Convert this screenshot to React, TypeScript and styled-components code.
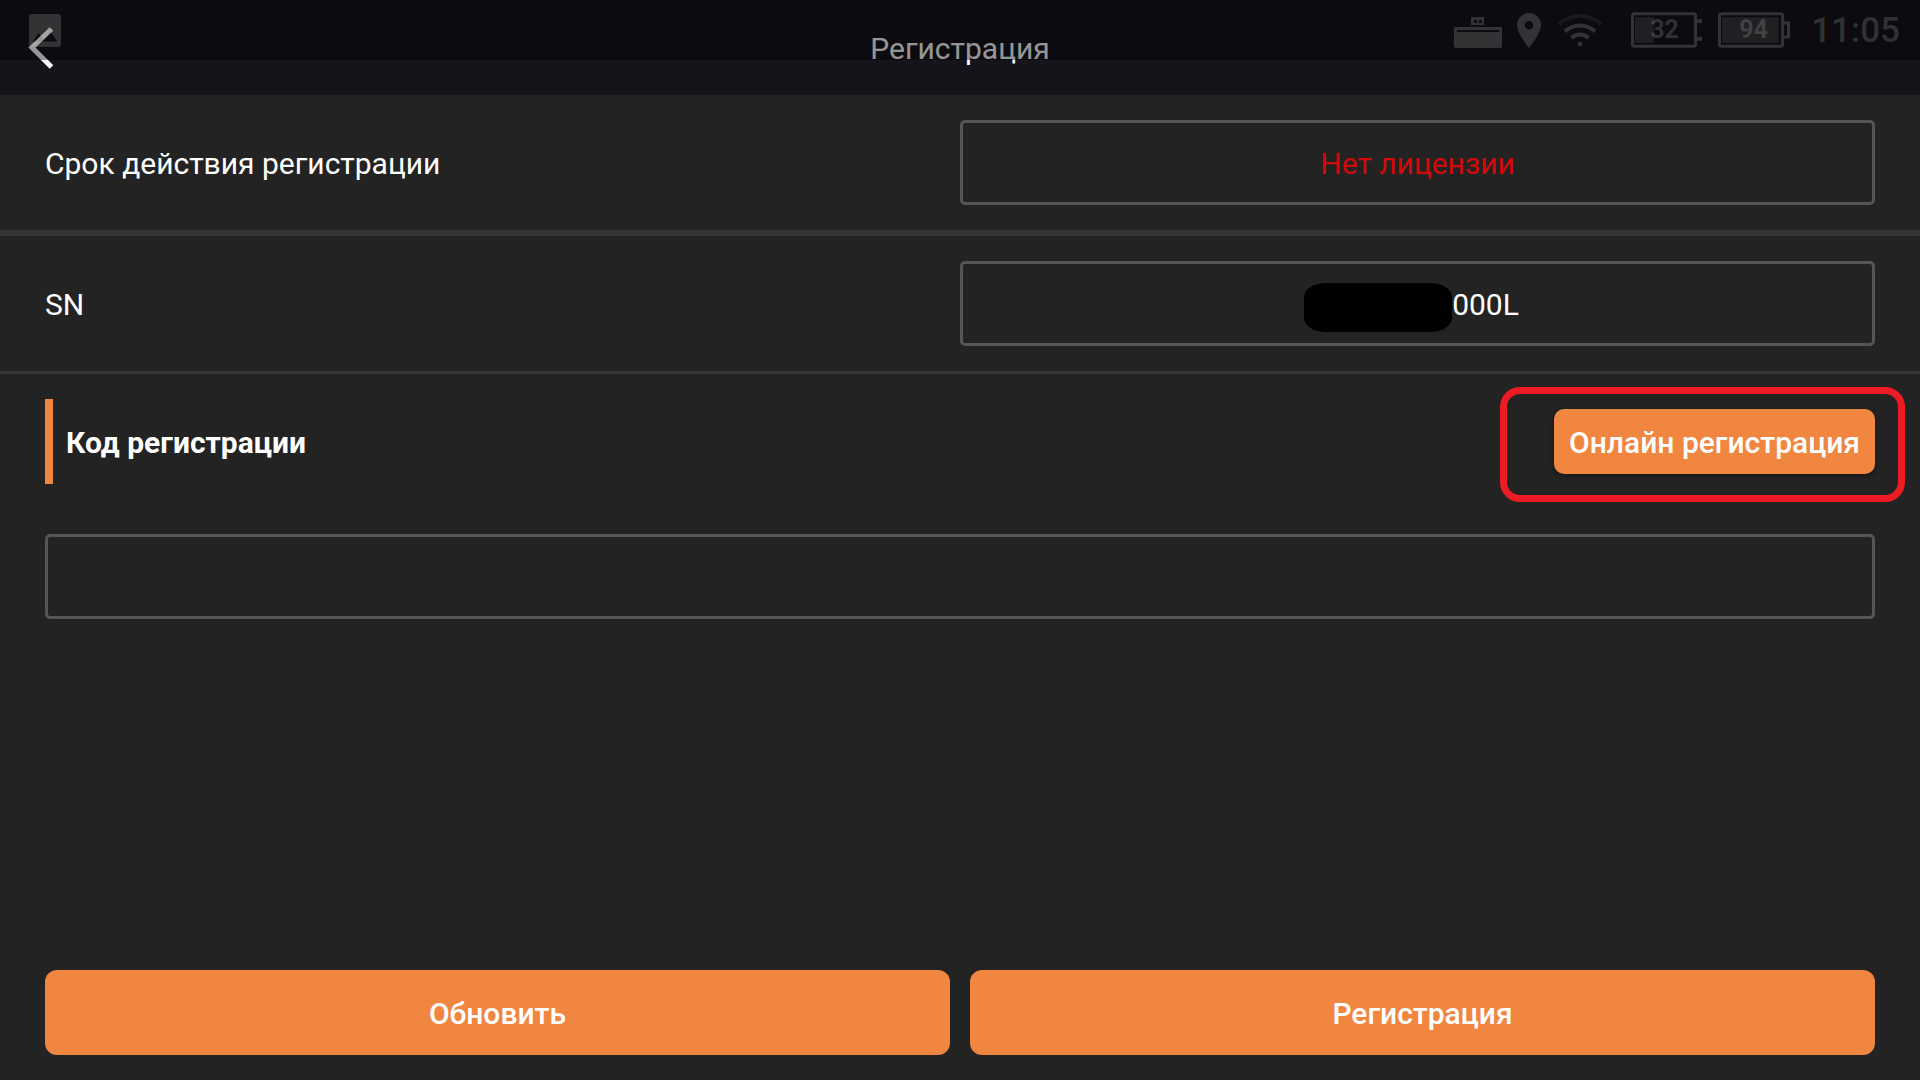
import React, { useState } from "react";
import styled, { createGlobalStyle } from "styled-components";

const GlobalStyle = createGlobalStyle`
  *, *::before, *::after { box-sizing: border-box; }
  body {
    margin: 0;
    background: #232323;
    color: #ffffff;
    font-family: Roboto, "Noto Sans", sans-serif;
    font-size: 30px;
    line-height: 36px;
  }
`;

const Page = styled.div`
  position: relative;
  display: flex;
  flex-direction: column;
  min-height: 100vh;
`;

const Header = styled.header`
  display: grid;
  grid-template-columns: 1fr auto 1fr;
  align-items: center;
  height: 95px;
  padding: 0 25px;
  background: #15141a;
`;

const BackButton = styled.button`
  display: flex;
  justify-self: start;
  padding: 0;
  border: 0;
  background: none;
  cursor: pointer;
`;

const Title = styled.h1`
  margin: 0;
  padding-top: 2px;
  font-size: 30px;
  font-weight: 400;
`;

/* Translucent system bar, laid over the top of the header */
const StatusBar = styled.div`
  position: absolute;
  top: 0;
  left: 0;
  right: 0;
  display: flex;
  align-items: center;
  justify-content: space-between;
  height: 60px;
  padding: 0 20px 0 29px;
  background: rgba(0, 0, 0, 0.41);
  color: rgba(255, 255, 255, 0.16);
  pointer-events: none;
`;

const StatusGroup = styled.div`
  display: flex;
  align-items: center;
  gap: 15px;
`;

const RadioGroup = styled(StatusGroup)`
  margin-right: 12px;
`;

const Clock = styled.time`
  margin-left: 6px;
  padding-top: 2px;
  font-size: 35px;
  font-weight: 500;
`;

const BatteryBox = styled.div`
  position: relative;
  display: flex;
  width: 72px;
  height: 36px;
`;

const BatteryLevel = styled.span<{ $left: number }>`
  position: absolute;
  left: ${(p) => p.$left}px;
  top: 0;
  font-size: 25px;
  font-weight: 700;
  line-height: 36px;
`;

const Main = styled.main`
  display: flex;
  flex: 1;
  flex-direction: column;
`;

const Row = styled.div<{ $divider?: number }>`
  display: grid;
  grid-template-columns: 1fr 1fr;
  align-items: center;
  padding: 25px 45px;
  border-bottom: ${(p) => p.$divider ?? 0}px solid #353535;
`;

const RowLabel = styled.label`
  padding-top: 2px;
`;

const Value = styled.output<{ $alert?: boolean }>`
  display: flex;
  align-items: center;
  justify-content: center;
  height: 85px;
  padding-top: 2px;
  border: 3px solid #555555;
  border-radius: 5px;
  color: ${(p) => (p.$alert ? "#d20a0a" : "#ffffff")};
`;

const HiddenDigits = styled.span`
  position: relative;
  width: 136px;
  height: 44px;

  &::before {
    content: "";
    position: absolute;
    inset: 0 0 -5px -12px;
    border-radius: 22px / 14px;
    background: #000000;
  }
`;

const CodeHeader = styled.div`
  display: flex;
  align-items: center;
  justify-content: space-between;
  padding: 25px 45px;
`;

const CodeLabel = styled.label`
  display: flex;
  align-items: center;
  height: 85px;
  padding: 2px 0 0 13px;
  border-left: 8px solid #f0863f;
  font-weight: 700;
`;

const Highlight = styled.div`
  position: relative;
  display: flex;

  &::after {
    content: "";
    position: absolute;
    inset: -22px -30px -28px -54px;
    border: 7px solid #ed1c24;
    border-radius: 20px;
    pointer-events: none;
  }
`;

const Button = styled.button<{ $compact?: boolean }>`
  height: ${(p) => (p.$compact ? 65 : 85)}px;
  padding: 2px 15px 0;
  border: 0;
  border-radius: ${(p) => (p.$compact ? 10 : 12)}px;
  background: #f0863f;
  box-shadow: ${(p) => (p.$compact ? "0 2px 5px rgba(0, 0, 0, 0.4)" : "none")};
  color: #ffffff;
  font: 500 30px/36px Roboto, "Noto Sans", sans-serif;
  cursor: pointer;
`;

const CodeField = styled.div`
  display: flex;
  padding: 25px 45px;
`;

const CodeInput = styled.input`
  flex: 1;
  min-width: 0;
  height: 85px;
  padding: 0 20px;
  border: 3px solid #555555;
  border-radius: 5px;
  outline: 0;
  background: transparent;
  color: #ffffff;
  font: 400 30px/36px Roboto, "Noto Sans", sans-serif;
`;

const Actions = styled.footer`
  display: grid;
  grid-template-columns: 1fr 1fr;
  gap: 20px;
  margin-top: auto;
  padding: 25px 45px;
`;

const BackIcon = () => (
  <svg width="32" height="44" viewBox="0 0 32 44" fill="none" aria-hidden="true">
    <path d="M26.5 3 7 21.5 26.5 41" stroke="#fff" strokeWidth="5" />
  </svg>
);

const PictureIcon = () => (
  <svg width="32" height="33" viewBox="0 0 32 33" fill="currentColor" aria-hidden="true">
    <path
      fillRule="evenodd"
      d="M3 0h26a3 3 0 0 1 3 3v27a3 3 0 0 1-3 3H3a3 3 0 0 1-3-3V3a3 3 0 0 1 3-3zM4 27.500h24.500L21 17l-6.500 8.500L9.500 19z"
    />
  </svg>
);

const UsbIcon = () => (
  <svg width="48" height="36" viewBox="0 -5 48 36" fill="currentColor" aria-hidden="true">
    <path fillRule="evenodd" d="M17 0h13v8H17zM20 3v3h3V3zM25 3v3h3V3z" />
    <path
      fillRule="evenodd"
      d="M1 10h46a1 1 0 0 1 1 1v18a2 2 0 0 1-2 2H2a2 2 0 0 1-2-2V11a1 1 0 0 1 1-1zM3 13v2h42v-2z"
    />
  </svg>
);

const PinIcon = () => (
  <svg width="24" height="35" viewBox="0 0 24 35" fill="currentColor" aria-hidden="true">
    <path
      fillRule="evenodd"
      d="M12 0C5.400 0 0 5.400 0 12c0 8.500 12 23 12 23s12-14.500 12-23C24 5.400 18.600 0 12 0zm0 8a4.200 4.200 0 1 1 0 8.400A4.200 4.200 0 0 1 12 8z"
    />
  </svg>
);

const WifiIcon = () => (
  <svg width="48" height="34" viewBox="-1 0 48 34" fill="none" stroke="currentColor" strokeWidth="4" aria-hidden="true">
    <path d="M2 11.500a30 30 0 0 1 42 0" opacity="0.35" />
    <path d="M8 18.500a21.500 21.500 0 0 1 30 0" />
    <path d="M14.500 25a12 12 0 0 1 17 0" />
    <circle cx="23" cy="31" r="2.300" fill="currentColor" stroke="none" />
  </svg>
);

function Battery({ level, device }: { level: number; device?: boolean }) {
  return (
    <BatteryBox>
      <svg width="73" height="36" viewBox="0 0 73 36" fill="none" stroke="currentColor" aria-hidden="true">
        <rect x="1.500" y="1.500" width="64" height="33" rx="2" strokeWidth="3" />
        <rect x="4" y="5" width={(57 * level) / 100 + (device ? 4 : 1)} height="26" fill="currentColor" stroke="none" opacity="0.5" />
        {device ? (
          <path d="M67 11h4.500v14H67" strokeWidth="3" />
        ) : (
          <path d="M67 9h5M67 27h5" strokeWidth="4" />
        )}
      </svg>
      <BatteryLevel $left={device ? 21 : 19}>{level}</BatteryLevel>
    </BatteryBox>
  );
}

export default function App() {
  const [code, setCode] = useState("");

  return (
    <>
      <GlobalStyle />
      <Page>
        <Header>
          <BackButton type="button" aria-label="Назад">
            <BackIcon />
          </BackButton>
          <Title>Регистрация</Title>
        </Header>
        <Main>
          <Row $divider={6}>
            <RowLabel htmlFor="validity">Срок действия регистрации</RowLabel>
            <Value id="validity" $alert>
              Нет лицензии
            </Value>
          </Row>
          <Row $divider={3}>
            <RowLabel htmlFor="serial">SN</RowLabel>
            <Value id="serial">
              <HiddenDigits />
              000L
            </Value>
          </Row>
          <CodeHeader>
            <CodeLabel htmlFor="code">Код регистрации</CodeLabel>
            <Highlight>
              <Button type="button" $compact>
                Онлайн регистрация
              </Button>
            </Highlight>
          </CodeHeader>
          <CodeField>
            <CodeInput id="code" value={code} onChange={(e) => setCode(e.target.value)} />
          </CodeField>
        </Main>
        <Actions>
          <Button type="button">Обновить</Button>
          <Button type="button">Регистрация</Button>
        </Actions>
        <StatusBar>
          <PictureIcon />
          <StatusGroup>
            <RadioGroup>
              <UsbIcon />
              <PinIcon />
              <WifiIcon />
            </RadioGroup>
            <Battery level={32} />
            <Battery level={94} device />
            <Clock>11:05</Clock>
          </StatusGroup>
        </StatusBar>
      </Page>
    </>
  );
}
